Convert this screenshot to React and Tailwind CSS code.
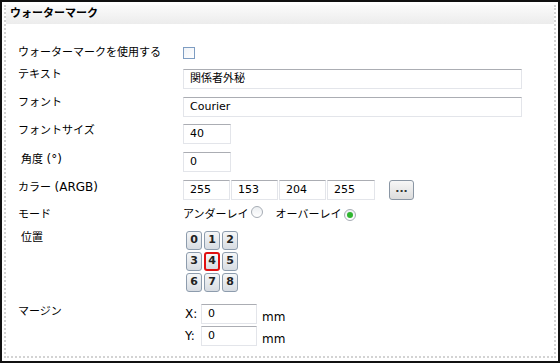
const font = { fontFamily: '"DejaVu Sans", "Noto Sans CJK JP", sans-serif' }

function Field({ value, className = '' }) {
    return (
        <div className={`h-[20px] flex items-center bg-white border border-[#e3e5ea] border-t-[#abadb3] px-[6px] text-[11px] text-black ${className}`}>
            {value}
        </div>
    )
}

function Row({ label, className = '', labelClass = '', children }) {
    return (
        <div className={`flex ${className}`}>
            <div className={`w-[177px] shrink-0 pl-[12px] leading-[14px] ${labelClass}`}>{label}</div>
            <div className="flex-1">{children}</div>
        </div>
    )
}

function Radio({ checked }) {
    return (
        <span className="inline-flex w-[12px] h-[12px] rounded-full border border-[#a6acb4] bg-gradient-to-b from-[#eceff2] to-white items-center justify-center">
            {checked && <span className="w-[6px] h-[6px] rounded-full bg-[#2fb52f]" />}
        </span>
    )
}

function PosButton({ n, active }) {
    return (
        <div
            className={`w-[16px] h-[19px] flex items-center justify-center rounded-[3px] text-[11px] font-bold text-[#222] bg-gradient-to-b from-[#f6f7f8] to-[#d7dce2] ${
                active ? 'border-2 border-[#e01010]' : 'border border-[#8d9cad]'
            }`}
        >
            {n}
        </div>
    )
}

export default function App() {
    return (
        <div style={font} className="w-[560px] h-[363px] bg-white border-2 border-[#111] pt-[3px] px-[2px] pb-[3px] text-[11px] text-black">
            <div className="h-full border-x-2 border-b-2 border-dotted border-[#d3d3d3] flex flex-col">

                {/* header */}
                <div className="h-[19px] pl-[4px] flex items-center bg-gradient-to-b from-[#fbfbfb] to-[#ececec] font-bold text-[11px]">
                    ウォーターマーク
                </div>

                <div className="pt-[18px] flex flex-col">

                    <Row label="ウォーターマークを使用する" className="h-[22px] items-center">
                        <div className="w-[12px] h-[12px] border border-[#7e9dc2] bg-gradient-to-br from-[#f0f3f7] to-white" />
                    </Row>

                    <Row label="テキスト" className="h-[28px] mt-[4px]">
                        <Field value="関係者外秘" className="w-[339px] mt-[1px]" />
                    </Row>

                    <Row label="フォント" className="h-[28px]">
                        <Field value="Courier" className="w-[339px] mt-[1px]" />
                    </Row>

                    <Row label="フォントサイズ" className="h-[28px]">
                        <Field value="40" className="w-[48px]" />
                    </Row>

                    <Row label={<>角度 <span className="text-[12px]">(°)</span></>} labelClass="!pl-[15px]" className="h-[28px]">
                        <Field value="0" className="w-[48px]" />
                    </Row>

                    <Row label={<>カラー <span className="text-[12px]">(ARGB)</span></>} className="h-[28px]">
                        <div className="flex items-start">
                            <div className="flex gap-[1px]">
                                <Field value="255" className="w-[47px]" />
                                <Field value="153" className="w-[47px]" />
                                <Field value="204" className="w-[47px]" />
                                <Field value="255" className="w-[48px]" />
                            </div>
                            <div className="ml-[14px] w-[25px] h-[20px] rounded-[3px] border border-[#8a96a4] bg-gradient-to-b from-[#f7f7f7] to-[#dcdcdc] flex items-center justify-center font-bold text-[#333] leading-none pb-[3px]">
                                ...
                            </div>
                        </div>
                    </Row>

                    <Row label="モード" className="h-[22px]">
                        <div className="flex items-center h-[14px]">
                            <span>アンダーレイ</span>
                            <span className="ml-[2px]"><Radio /></span>
                            <span className="ml-[13px]">オーバーレイ</span>
                            <span className="ml-[3px]"><Radio checked /></span>
                        </div>
                    </Row>

                    <Row label="位置" labelClass="!pl-[15px] pt-[1px]" className="h-[72px]">
                        <div className="grid grid-cols-[16px_16px_16px] gap-x-[2px] gap-y-[2px] ml-[3px] mt-[1px]">
                            {[0, 1, 2, 3, 4, 5, 6, 7, 8].map(n => (
                                <PosButton key={n} n={n} active={n === 4} />
                            ))}
                        </div>
                    </Row>

                    <Row label="マージン" labelClass="pt-[3px]" className="h-[42px]">
                        <div className="flex flex-col gap-[2px] pt-[2px] ml-[2px] text-[12px]">
                            <div className="flex items-end">
                                <span className="w-[16px] pb-[1px]">X:</span>
                                <Field value="0" className="w-[56px] h-[18px]" />
                                <span className="ml-[5px] -mb-[2px]">mm</span>
                            </div>
                            <div className="flex items-end">
                                <span className="w-[16px] pb-[1px]">Y:</span>
                                <Field value="0" className="w-[56px] h-[18px]" />
                                <span className="ml-[5px] -mb-[2px]">mm</span>
                            </div>
                        </div>
                    </Row>

                </div>
            </div>
        </div>
    )
}
